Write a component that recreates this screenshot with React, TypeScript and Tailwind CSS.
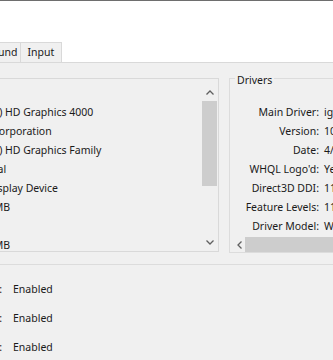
import React from 'react';

const deviceRows: [string, string][] = [
    ['Name:', 'Intel(R) HD Graphics 4000'],
    ['Manufacturer:', 'Intel Corporation'],
    ['Chip Type:', 'Intel(R) HD Graphics Family'],
    ['DAC Type:', 'Internal'],
    ['Device Type:', 'Full Display Device'],
    ['Approx. Total Memory:', '2112 MB'],
    ['', ''],
    ['Shared Memory:', '1792 MB'],
];

const driverRows: [string, string][] = [
    ['Main Driver:', 'igdumdim64.dll,igd10iumd64.dll,igd10iumd64.dll'],
    ['Version:', '10.18.10.4358'],
    ['Date:', '4/7/2016 2:00:00 AM'],
    ["WHQL Logo'd:", 'Yes'],
    ['Direct3D DDI:', '11.1'],
    ['Feature Levels:', '11_0,10_1,10_0,9_3,9_2,9_1'],
    ['Driver Model:', 'WDDM 1.3'],
];

const features = ['DirectDraw Acceleration:', 'Direct3D Acceleration:', 'AGP Texture Acceleration:'];

const App = () => {
    return (
        <div
            className="w-[333px] h-[360px] overflow-hidden bg-white flex flex-col text-[10.5px] text-[#1a1a1a]"
            style={{ fontFamily: '"Noto Sans", "Open Sans", sans-serif' }}
        >
            <div className="h-px bg-[#6e6e6e] shrink-0" />
            <div className="h-[41px] shrink-0" />

            {/* tabs */}
            <div className="flex h-[20px] shrink-0 items-end">
                <div className="-ml-[16px] h-[20px] px-[2px] flex items-center bg-[#f0f0f0] border-t border-r border-[#d9d9d9] whitespace-nowrap">
                    Sound
                </div>
                <div className="h-[20px] px-[7px] flex items-center bg-[#f0f0f0] border-t border-r border-[#d9d9d9]">
                    Input
                </div>
            </div>

            {/* panel */}
            <div className="flex-1 bg-[#f0f0f0] border-t border-[#d9d9d9] flex flex-col">
                <div className="h-[15px] shrink-0" />
                <div className="flex h-[174px] shrink-0">
                    {/* device list */}
                    <div className="w-[219px] h-[174px] shrink-0 border border-l-0 border-[#d9d9d9] flex overflow-hidden">
                        <div className="flex-1 overflow-hidden pt-[24px]">
                            {deviceRows.map(([label, value], i) => (
                                <div key={i} className="flex h-[19px] items-center whitespace-nowrap -ml-[143px]">
                                    <span className="w-[104px] text-right shrink-0">{label}</span>
                                    <span className="ml-[6px]">{value}</span>
                                </div>
                            ))}
                        </div>
                        <div className="w-[17px] shrink-0 flex flex-col">
                            <div className="h-[22px] flex items-end justify-center pb-[6px]">
                                <svg width="8" height="5" viewBox="0 0 8 5">
                                    <path d="M0.5 4.5 L4 1 L7.5 4.5" fill="none" stroke="#606060" strokeWidth="1.3" />
                                </svg>
                            </div>
                            <div className="h-[85px] mx-[1px] bg-[#cdcdcd]" />
                            <div className="flex-1" />
                            <div className="h-[17px] flex items-center justify-center">
                                <svg width="8" height="5" viewBox="0 0 8 5">
                                    <path d="M0.5 0.5 L4 4 L7.5 0.5" fill="none" stroke="#606060" strokeWidth="1.3" />
                                </svg>
                            </div>
                        </div>
                    </div>

                    {/* drivers group */}
                    <div className="ml-[10px] w-[120px] shrink-0 h-[175px] border border-r-0 border-[#dcdcdc] relative flex flex-col">
                        <span className="absolute -top-[5px] left-[5px] px-[2px] bg-[#f0f0f0] leading-[13px]">Drivers</span>
                        <div className="h-[24px] shrink-0" />
                        {driverRows.map(([label, value], i) => (
                            <div key={i} className="flex h-[19px] items-center whitespace-nowrap">
                                <span className="w-[89px] text-right shrink-0">{label}</span>
                                <span className="ml-[5px]">{value}</span>
                            </div>
                        ))}
                        <div className="mt-[1px] ml-[3px] h-[15px] flex items-center">
                            <div className="w-[12px] flex justify-center">
                                <svg width="5" height="8" viewBox="0 0 5 8">
                                    <path d="M4.5 0.5 L1 4 L4.5 7.5" fill="none" stroke="#606060" strokeWidth="1.3" />
                                </svg>
                            </div>
                            <div className="flex-1 h-[15px] bg-[#cdcdcd]" />
                        </div>
                    </div>
                </div>

                <div className="h-[12px] shrink-0" />
                <div className="h-px bg-[#dcdcdc] shrink-0" />
                <div className="pt-[15px] flex flex-col gap-[10px]">
                    {features.map((label) => (
                        <div key={label} className="flex h-[19px] items-center whitespace-nowrap -ml-[140px]">
                            <span className="w-[142px] text-right shrink-0">{label}</span>
                            <span className="ml-[11px]">Enabled</span>
                        </div>
                    ))}
                </div>
            </div>
        </div>
    );
};

export default App;
